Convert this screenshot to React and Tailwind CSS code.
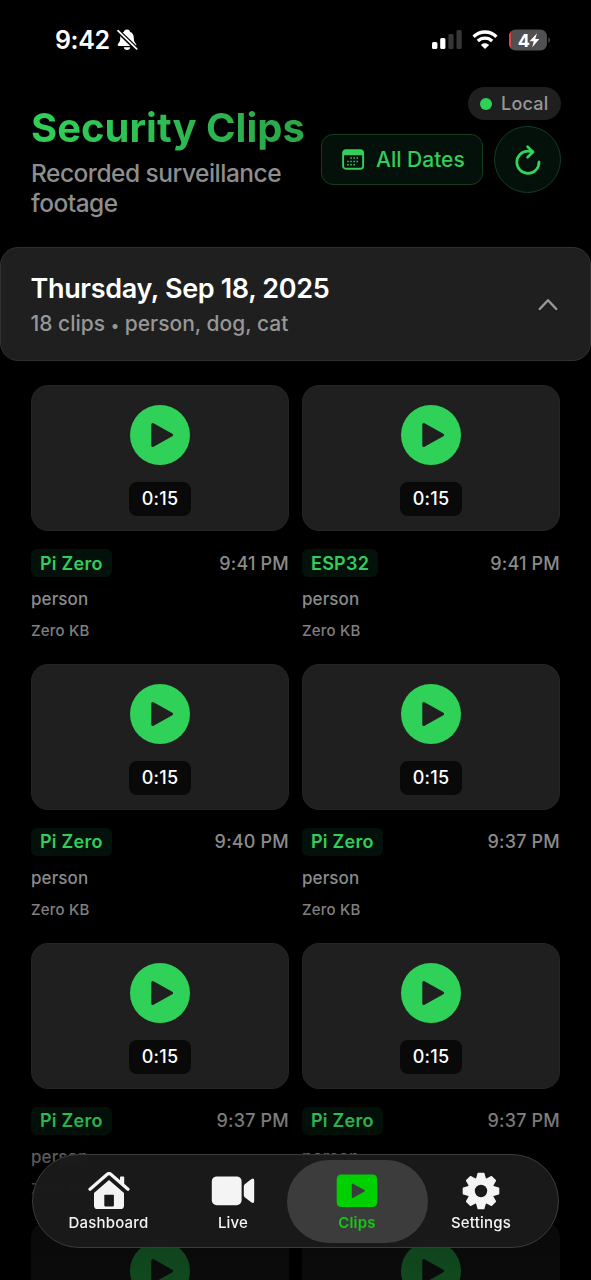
const clips = [
  { cam: 'Pi Zero', time: '9:41 PM' },
  { cam: 'ESP32', time: '9:41 PM' },
  { cam: 'Pi Zero', time: '9:40 PM' },
  { cam: 'Pi Zero', time: '9:37 PM' },
  { cam: 'Pi Zero', time: '9:37 PM' },
  { cam: 'Pi Zero', time: '9:37 PM' },
];

function StatusBar() {
  return (
    <div className="flex h-[80px] items-center justify-between pl-[55px] pr-[40px]">
      <div className="flex items-center gap-[7px]">
        <span className="text-[25px] leading-[30px] font-semibold tracking-[-0.4px] text-white">9:42</span>
        <svg width="21" height="22" viewBox="0 0 22 23">
          <path d="M10.5 .6C8.8 .6 7.6 1.6 7.3 2.8C4.2 3.9 3.4 6.4 3.4 9.2C3.4 12.5 2.8 13.8 1.2 15.4C.3 16.4 .6 17.8 2 17.8H19C20.4 17.8 20.7 16.4 19.8 15.4C18.2 13.8 17.6 12.5 17.6 9.2C17.6 6.4 16.6 3.9 13.6 2.8C13.3 1.6 12.2 .6 10.5 .6Z" fill="#fff" />
          <path d="M7 19.2H14C13.6 21 12.3 22 10.5 22C8.7 22 7.4 21 7 19.2Z" fill="#fff" />
          <path d="M.6 1.6L20.6 21" stroke="#000" strokeWidth="4.6" />
          <path d="M1 1.8L20.6 20.8" stroke="#fff" strokeWidth="1.8" strokeLinecap="round" />
        </svg>
      </div>
      <div className="flex items-center">
        <svg width="30" height="20" viewBox="0 0 30 20">
          <rect x="0" y="12" width="5.4" height="7" rx="1.5" fill="#fff" />
          <rect x="8.2" y="8" width="5.2" height="11" rx="1.5" fill="#fff" />
          <rect x="16.4" y="4" width="5.2" height="15" rx="1.5" fill="#363636" />
          <rect x="24.5" y="0" width="5.2" height="19" rx="1.5" fill="#363636" />
        </svg>
        <svg className="ml-[10px]" width="26" height="20" viewBox="0 0 26 20">
          <path d="M1.6 6.7C8.2 .5 17.8 .5 24.4 6.7" fill="none" stroke="#fff" strokeWidth="3.4" />
          <path d="M5.8 11C10 7.1 16 7.1 20.2 11" fill="none" stroke="#fff" strokeWidth="3.3" />
          <path d="M13 19L8.9 14.9C11.2 12.8 14.8 12.8 17.1 14.9Z" fill="#fff" />
        </svg>
        <svg className="ml-[11px]" width="42" height="22" viewBox="0 0 42 22" fontFamily="Inter, sans-serif">
          <clipPath id="batt"><rect x="0" y="0.5" width="38" height="21" rx="6.5" /></clipPath>
          <g clipPath="url(#batt)">
            <rect width="38" height="22" fill="#505050" />
            <rect width="1.8" height="22" fill="#ff3b40" />
          </g>
          <path d="M39.4 8.2C41.4 9 41.4 13 39.4 13.8Z" fill="#505050" />
          <text x="8.8" y="17.6" fontSize="18" fontWeight="700" fill="#fff">4</text>
          <path d="M28 4.2L20.6 12.2H24.8L23.2 18.2L30.4 9.9H26.2Z" fill="#fff" />
        </svg>
      </div>
    </div>
  );
}

function Header() {
  return (
    <header className="flex h-[167px] justify-between pl-[31px] pr-[30px]">
      <div className="w-[280px] pt-[24px]">
        <h1 className="w-fit bg-gradient-to-r from-[#30d158] to-[#2ba64a] bg-clip-text text-[40px] leading-[48px] font-bold tracking-[0px] whitespace-nowrap text-transparent">
          Security Clips
        </h1>
        <p className="mt-[7px] text-[24.5px] leading-[29.5px] font-[450] tracking-[-0.5px] text-[#8e8e8e]">
          Recorded surveillance<br />footage
        </p>
      </div>
      <div className="flex flex-col items-end pt-[7px]">
        <div className="flex h-[33px] w-[93px] items-center rounded-full bg-[#1f1f20] pl-[12px]">
          <span className="size-[12px] rounded-full bg-[#30d158]" />
          <span className="ml-[9px] text-[18px] leading-[24px] font-[450] tracking-[0.2px] text-[#979797]">Local</span>
        </div>
        <div className="mt-[6px] flex items-center gap-[11px]">
          <button className="flex h-[51px] w-[162px] items-center rounded-[12px] border-[1.5px] border-[#143d1e] bg-[#03110a] pl-[20px] text-[#34cd5a]">
            <svg width="23" height="21" viewBox="0 0 23 21">
              <rect x="1.1" y="1.1" width="20" height="18.6" rx="2.8" fill="none" stroke="currentColor" strokeWidth="1.9" />
              <path d="M1 6.2V3.6Q1 1 3.6 1H18.4Q21 1 21 3.6V6.2Z" fill="currentColor" />
              <g stroke="currentColor" strokeWidth="1.5" strokeDasharray="1.5 1.6">
                <path d="M8.3 9H17.2M5.2 12.4H17.2M5.2 15.8H14" />
              </g>
            </svg>
            <span className="ml-[11px] text-[21px] leading-[26px] font-medium tracking-[0px] whitespace-nowrap">All Dates</span>
          </button>
          <button className="flex size-[67px] items-center justify-center rounded-full border-[1.5px] border-[#143d1e] bg-[#03110a]">
            <svg width="28" height="32" viewBox="0 0 28 32" fill="none" stroke="#34d35d" strokeWidth="2.7" strokeLinecap="round" strokeLinejoin="round">
              <path d="M25 17.8A11.1 11.1 0 1 1 13.9 7.2C15.6 7.2 17 7.5 18.7 7.9" />
              <path d="M13.6 2.8L19 8L13.6 13.2" />
            </svg>
          </button>
        </div>
      </div>
    </header>
  );
}

function PlayButton() {
  return (
    <div className="flex size-[60px] shrink-0 items-center justify-center rounded-full bg-[#30d158]">
      <svg className="ml-[3px]" width="24" height="28" viewBox="0 0 24 28">
        <path d="M2.8 3.5V24.5L21.6 14Z" fill="#1f1f1f" stroke="#1f1f1f" strokeWidth="3" strokeLinejoin="round" />
      </svg>
    </div>
  );
}

function ClipCard({ cam, time }) {
  return (
    <article className="flex h-[278.75px] flex-col">
      <div className="flex h-[146px] shrink-0 flex-col items-center rounded-[17px] border border-[#252525] bg-[#1f1f1f] pt-[19px]">
        <PlayButton />
        <div className="mt-[17px] flex h-[34px] w-[62px] items-center justify-center rounded-[8px] bg-[#090909] text-[18px] leading-[24px] font-medium tracking-[0.2px] text-white">0:15</div>
      </div>
      <div className="mt-[18px] flex h-[28px] items-center justify-between">
        <span className="flex h-[28px] items-center rounded-[6px] bg-[#03110a] px-[9px] pt-px text-[18px] leading-[24px] font-semibold tracking-[0.25px] text-[#34cd5a]">{cam}</span>
        <span className="pt-px text-[18px] leading-[24px] font-[450] tracking-[0.2px] text-[#8b8b8b]">{time}</span>
      </div>
      <p className="mt-[11px] text-[17px] leading-[22px] font-[450] tracking-[0.1px] text-[#8b8b8b]">person</p>
      <p className="mt-[11px] text-[15px] leading-[20px] font-[450] tracking-[0.2px] text-[#808080]">Zero KB</p>
    </article>
  );
}

function ClipPeek() {
  return (
    <div className="flex h-[59px] flex-col items-center overflow-hidden rounded-t-[17px] bg-[#1f1f1f] pt-[20px]">
      <PlayButton />
    </div>
  );
}

function HouseIcon() {
  return (
    <svg width="42" height="38" viewBox="0 0 42 38">
      <path d="M21 8L36 21V33.4Q36 37 32.4 37H9.6Q6 37 6 33.4V21Z" fill="#f4f4f4" />
      <path d="M2 17.3L19.2 2.2Q21 .8 22.8 2.2L40 17.3" fill="none" stroke="#1a1a1a" strokeWidth="7" />
      <path d="M2 17.3L19.2 2.3Q21 .9 22.8 2.3L40 17.3" fill="none" stroke="#f4f4f4" strokeWidth="3.2" strokeLinecap="round" />
      <path d="M32 5.3Q32 4.5 32.8 4.5H35.4Q36.2 4.5 36.2 5.3V14L32 10.5Z" fill="#f4f4f4" />
      <rect x="16.3" y="22.8" width="9.6" height="11.6" rx="0.8" fill="#1a1a1a" />
    </svg>
  );
}

function VideoIcon() {
  return (
    <svg width="44" height="38" viewBox="0 0 44 38">
      <rect x="0.8" y="4.4" width="29.8" height="28.8" rx="5" fill="#f4f4f4" />
      <path d="M32.8 14.2Q32.8 13 33.7 12.2L40.2 7.2Q43.2 5.5 43.2 8.5V29Q43.2 32 40.2 30.3L33.7 25.2Q32.8 24.5 32.8 23.3Z" fill="#f4f4f4" />
    </svg>
  );
}

function ClipsIcon() {
  return (
    <svg width="42" height="38" viewBox="0 0 42 38">
      <rect x="0.7" y="2.5" width="40.6" height="32.6" rx="4.5" fill="#00d000" />
      <path d="M16.6 12.4V25.2L28 18.8Z" fill="#3c3c3c" stroke="#3c3c3c" strokeWidth="1.6" strokeLinejoin="round" />
    </svg>
  );
}

function GearIcon() {
  return (
    <svg width="38" height="38" viewBox="-19 -19 38 38">
      <mask id="hub">
        <rect x="-19" y="-19" width="38" height="38" fill="#fff" />
        <circle r="6.2" fill="#000" />
      </mask>
      <g mask="url(#hub)" fill="#f4f4f4" stroke="#f4f4f4" strokeWidth="1.6" strokeLinejoin="round">
        <circle r="12.6" />
        {[0, 45, 90, 135, 180, 225, 270, 315].map((a) => (
          <path key={a} transform={`rotate(${a})`} d="M-4.4 -11.5L-2.7 -17.5H2.7L4.4 -11.5Z" />
        ))}
      </g>
    </svg>
  );
}

const tabs = [
  { label: 'Dashboard', Icon: HouseIcon, box: 'w-[142px]' },
  { label: 'Live', Icon: VideoIcon, box: 'w-[107px]' },
  { label: 'Clips', Icon: ClipsIcon, box: 'w-[141px]', active: true },
  { label: 'Settings', Icon: GearIcon, box: 'w-[107px]' },
];

function TabBar() {
  return (
    <nav className="absolute top-[1154px] left-[32px] flex h-[94px] w-[527px] items-center rounded-full border border-[#3b3b3b] bg-[#1a1a1a]/95 pl-[4.5px] backdrop-blur-[2px]">
      {tabs.map(({ label, Icon, box, active }) => (
        <div key={label} className={`${box} ${active ? 'bg-[#3c3c3c] text-[#14c814] font-semibold' : 'text-[#f4f4f4] font-medium'} flex h-[83px] shrink-0 flex-col items-center rounded-full pt-[12px] text-[15px]`}>
          <Icon />
          <span className="mt-[4px] leading-[18px] tracking-[0.2px]">{label}</span>
        </div>
      ))}
    </nav>
  );
}

export default function App() {
  return (
    <div className="relative h-[1280px] w-[591px] overflow-hidden bg-black font-['Inter',sans-serif]">
      <StatusBar />
      <Header />
      <section className="flex h-[114px] items-center justify-between rounded-[18px] border-[1.5px] border-[#303030] bg-[#1f1f1f] pl-[29.5px] pr-[32px]">
        <div className="flex flex-col pt-[2px]">
          <h2 className="text-[27px] leading-[34px] font-semibold tracking-[-0.35px] text-white">Thursday, Sep 18, 2025</h2>
          <p className="mt-[4px] text-[21px] leading-[28px] font-[450] tracking-[0px] text-[#979797]">
            18 clips <span className="text-[16px]">•</span> person, dog, cat
          </p>
        </div>
        <svg width="20" height="14" viewBox="0 0 20 14" fill="none" stroke="#999" strokeWidth="2.4" strokeLinecap="round" strokeLinejoin="round">
          <path d="M1.7 12L10 3.2L18.3 12" />
        </svg>
      </section>
      <main className="grid grid-cols-2 gap-x-[13px] px-[31px] pt-[24px]">
        {clips.map((c, i) => (
          <ClipCard key={i} {...c} />
        ))}
        <ClipPeek />
        <ClipPeek />
      </main>
      <div className="absolute inset-x-0 top-[1100px] h-[180px] bg-gradient-to-b from-transparent via-black/70 via-65% to-black/65" />
      <TabBar />
    </div>
  );
}
